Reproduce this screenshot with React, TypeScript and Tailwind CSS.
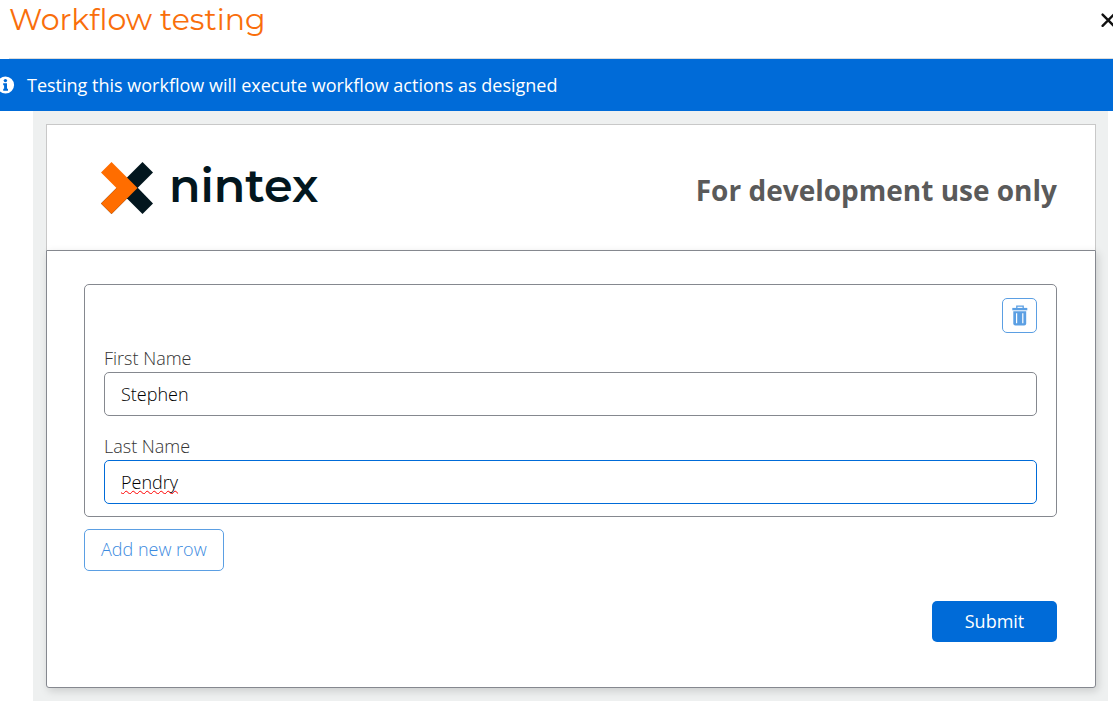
import { useState } from "react";

function InfoIcon() {
    return (
        <svg viewBox="0 0 18 18" className="-ml-[3px] h-[18px] w-[18px] flex-none" aria-hidden="true">
            <circle cx="8.5" cy="9" r="8.6" fill="#fff" />
            <circle cx="8.4" cy="4.6" r="1.7" fill="#006bd8" />
            <path d="M6.2 7.3h3.8v5.5h1v2H6.2v-2h.9V9.2h-.9z" fill="#006bd8" />
        </svg>
    );
}

function CloseIcon() {
    return (
        <svg viewBox="0 0 16 16" className="h-4 w-4" fill="none" stroke="#111" strokeWidth="2.4" strokeLinecap="round">
            <path d="M2.6 2.6l11.2 11.2M13.8 2.6L2.6 13.8" />
        </svg>
    );
}

function TrashIcon() {
    return (
        <svg viewBox="0 0 16 21" className="h-[21px] w-4" aria-hidden="true">
            <path d="M4.8 3V1.2h6.4V3" fill="none" stroke="#5b9fe3" strokeWidth="1.3" />
            <path d="M.3 2.9h15v2.4H.3z" fill="#5b9fe3" />
            <path d="M1.3 6.2h12.9v12.3a2 2 0 0 1-2 2H3.3a2 2 0 0 1-2-2z" fill="#5b9fe3" />
            <path d="M4.6 8.3v10M10.8 8.3v10" stroke="#fff" strokeWidth="1.2" />
        </svg>
    );
}

function Logo() {
    return (
        <div className="flex items-center gap-4">
            <svg viewBox="0 0 52 52" className="h-[52px] w-[52px]" aria-hidden="true">
                <path d="M41.5 0L52 10.5 10.5 52 0 41.5z" fill="#02161e" />
                <path d="M26 26l10.5-.5L52 41.5 41.5 52 26 36.5z" fill="#02161e" />
                <path d="M10.5 0L36.5 26 10.5 52 0 41.5 15.5 26 0 10.5z" fill="#ff6d00" />
            </svg>
            <span className="-mt-1 font-['Montserrat','Inter',sans-serif] text-[46px] leading-[52px] font-semibold text-[#02161e]">nintex</span>
        </div>
    );
}

const inputClass = "block h-11 w-full rounded-[5px] border bg-white px-4 pb-px text-lg font-light text-black outline-none";

export default function App() {
    const [firstName, setFirstName] = useState("Stephen");
    const [lastName, setLastName] = useState("Pendry");

    return (
        <div className="flex min-h-screen flex-col overflow-hidden bg-white font-['Open_Sans',sans-serif]">
            <header className="ml-[9px] flex h-[59px] items-start justify-between border-b border-[#dcdcdc]">
                <h1 className="font-['Montserrat','Inter',sans-serif] text-[30px] leading-10 text-[#f96e0b]">Workflow testing</h1>
                <button type="button" aria-label="Close" className="-mr-[3px] mt-3">
                    <CloseIcon />
                </button>
            </header>

            <div className="flex h-[52px] items-center gap-3 bg-[#006bd8] text-white">
                <InfoIcon />
                <p className="text-lg">Testing this workflow will execute workflow actions as designed</p>
            </div>

            <main className="mr-[5px] ml-[33px] flex-1 bg-[#eef0f0] pt-[13px] pr-3 pb-[13px] pl-[13px]">
                <div className="flex h-[126px] items-center justify-between border border-b-0 border-[#c8c8c8] bg-white pr-[38px] pl-[54px]">
                    <Logo />
                    <p className="mt-1 text-[28px] leading-9 font-bold text-[#5a5a5a]">For development use only</p>
                </div>

                <form
                    onSubmit={(e) => e.preventDefault()}
                    className="rounded-b-[3px] border border-[#85888f] bg-white pt-[33px] pr-[38px] pb-[45px] pl-[37px] shadow-[2px_3px_8px_rgba(0,0,0,0.15)]"
                >
                    <div className="rounded-[5px] border border-[#85888f] px-[19px] pt-[13px] pb-3">
                        <div className="flex justify-end">
                            <button
                                type="button"
                                aria-label="Delete row"
                                className="flex h-[35px] w-[35px] items-center justify-center rounded-[5px] border border-[#5b9fe3]"
                            >
                                <TrashIcon />
                            </button>
                        </div>
                        <div className="mt-[11px]">
                            <label htmlFor="first-name" className="block text-lg leading-7 font-light text-[#333]">
                                First Name
                            </label>
                            <input
                                id="first-name"
                                value={firstName}
                                onChange={(e) => setFirstName(e.target.value)}
                                className={`${inputClass} border-[#85888f]`}
                            />
                        </div>
                        <div className="mt-4">
                            <label htmlFor="last-name" className="block text-lg leading-7 font-light text-[#333]">
                                Last Name
                            </label>
                            <input
                                id="last-name"
                                value={lastName}
                                onChange={(e) => setLastName(e.target.value)}
                                className={`${inputClass} border-[#006bd8] underline decoration-[#ff0000] decoration-wavy decoration-1 [text-decoration-skip-ink:none]`}
                            />
                        </div>
                    </div>

                    <button type="button" className="mt-3 h-[42px] rounded-[5px] border border-[#5b9fe3] px-4 pb-0.5 text-lg font-light text-[#3b8ae0]">
                        Add new row
                    </button>

                    <div className="mt-[30px] flex justify-end">
                        <button type="submit" className="h-[41px] w-[125px] rounded-[5px] bg-[#006bd8] pb-0.5 text-lg text-white">
                            Submit
                        </button>
                    </div>
                </form>
            </main>
        </div>
    );
}
